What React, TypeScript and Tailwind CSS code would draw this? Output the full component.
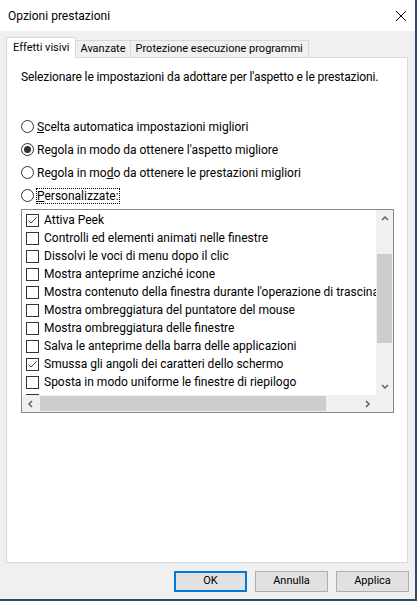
import React from "react";

const items = [
  { label: "Attiva Peek", checked: true },
  { label: "Controlli ed elementi animati nelle finestre", checked: false },
  { label: "Dissolvi le voci di menu dopo il clic", checked: false },
  { label: "Mostra anteprime anziché icone", checked: false },
  { label: "Mostra contenuto della finestra durante l'operazione di trascinamento", checked: false },
  { label: "Mostra ombreggiatura del puntatore del mouse", checked: false },
  { label: "Mostra ombreggiatura delle finestre", checked: false },
  { label: "Salva le anteprime della barra delle applicazioni", checked: false },
  { label: "Smussa gli angoli dei caratteri dello schermo", checked: true },
  { label: "Sposta in modo uniforme le finestre di riepilogo", checked: false },
  { label: "", checked: false },
];

function Radio({ checked, children }: { checked?: boolean; children: React.ReactNode }) {
  return (
    <div className="flex items-center h-[23px]">
      <span className="w-[13px] h-[13px] rounded-full border border-[#333] bg-white flex items-center justify-center shrink-0">
        {checked && <span className="w-[7px] h-[7px] rounded-full bg-[#333]" />}
      </span>
      <span className="ml-[3px]">{children}</span>
    </div>
  );
}

function Chevron({ dir }: { dir: "up" | "down" | "left" | "right" }) {
  const pts = {
    up: "1,5 4,2 7,5",
    down: "1,2 4,5 7,2",
    left: "5,1 2,4 5,7",
    right: "2,1 5,4 2,7",
  }[dir];
  const w = dir === "up" || dir === "down" ? 8 : 7;
  const h = dir === "up" || dir === "down" ? 7 : 8;
  return (
    <svg width={w} height={h} viewBox={`0 0 ${w} ${h}`}>
      <polyline points={pts} fill="none" stroke="#606060" strokeWidth="1.5" />
    </svg>
  );
}

export default function App() {
  return (
    <div
      className="w-[417px] h-[601px] bg-[#f0f0f0] flex flex-col border-r-2 border-b-2 border-[#2a4a6e] text-[12px] text-black overflow-hidden"
      style={{ fontFamily: "Roboto, 'Noto Sans', sans-serif" }}
    >
      {/* Title bar */}
      <div className="h-[31px] bg-white flex items-center justify-between pl-[8px] pr-[9px] shrink-0">
        <span>Opzioni prestazioni</span>
        <svg width="10" height="10" viewBox="0 0 10 10">
          <path d="M0 0 L10 10 M10 0 L0 10" stroke="#000" strokeWidth="1" />
        </svg>
      </div>

      {/* Tabs */}
      <div className="pt-[6px] pl-[6px] flex items-end text-[11px]">
        <div className="h-[21px] -mb-px relative z-10 bg-white border border-b-0 border-[#d9d9d9] px-[6px] flex items-center">
          Effetti visivi
        </div>
        <div className="h-[17px] bg-[#f0f0f0] border border-l-0 border-b-0 border-[#d9d9d9] px-[4px] flex items-center">
          Avanzate
        </div>
        <div className="h-[17px] bg-[#f0f0f0] border border-l-0 border-b-0 border-[#d9d9d9] px-[5px] flex items-center">
          Protezione esecuzione programmi
        </div>
      </div>

      {/* Panel */}
      <div className="ml-[6px] w-[402px] h-[506px] bg-white border border-[#d9d9d9] pl-[14px] pt-[11px] flex flex-col">
        <div className="leading-[16px] tracking-[-0.11px]">
          Selezionare le impostazioni da adottare per l'aspetto e le prestazioni.
        </div>

        <div className="mt-[30px] flex flex-col">
          <Radio>
            <span className="underline">S</span>celta automatica impostazioni migliori
          </Radio>
          <Radio checked>
            Re<span className="underline">g</span>ola in modo da ottenere l'aspetto migliore
          </Radio>
          <Radio>
            Regola in mo<span className="underline">d</span>o da ottenere le prestazioni migliori
          </Radio>
          <Radio>
            <span className="outline outline-1 outline-dotted outline-black">
              <span className="underline">P</span>ersonalizzate:
            </span>
          </Radio>
        </div>

        {/* List box */}
        <div className="mt-[2px] w-[373px] h-[204px] border border-[#828790] flex flex-col">
          <div className="flex flex-1 min-h-0">
            <div className="flex-1 overflow-hidden pt-px">
              {items.map((it, i) => (
                <div key={i} className="h-[18px] flex items-center pl-[4px] whitespace-nowrap">
                  <span className="w-[13px] h-[13px] border border-[#333] bg-white shrink-0 flex items-center justify-center">
                    {it.checked && (
                      <svg width="11" height="11" viewBox="0 0 11 11">
                        <polyline points="1.5,5.5 4,8 9.5,2.5" fill="none" stroke="#444" strokeWidth="1" />
                      </svg>
                    )}
                  </span>
                  {it.label && <span className="ml-[5px]">{it.label}</span>}
                </div>
              ))}
            </div>
            {/* vertical scrollbar */}
            <div className="w-[17px] bg-[#f0f0f0] flex flex-col items-center shrink-0">
              <div className="h-[17px] w-full flex items-center justify-center">
                <Chevron dir="up" />
              </div>
              <div className="flex-1 w-full pt-[27px] pb-[35px] px-px">
                <div className="h-full bg-[#cdcdcd]" />
              </div>
              <div className="h-[17px] w-full flex items-center justify-center">
                <Chevron dir="down" />
              </div>
            </div>
          </div>
          {/* horizontal scrollbar */}
          <div className="h-[17px] flex shrink-0">
            <div className="flex-1 bg-[#f0f0f0] flex items-center">
              <div className="w-[17px] h-full flex items-center justify-center">
                <Chevron dir="left" />
              </div>
              <div className="h-[15px] w-[286px] bg-[#cdcdcd] ml-px" />
              <div className="flex-1" />
              <div className="w-[17px] h-full flex items-center justify-center">
                <Chevron dir="right" />
              </div>
            </div>
            <div className="w-[17px] bg-[#f0f0f0]" />
          </div>
        </div>
      </div>

      {/* Buttons */}
      <div className="mt-[8px] flex justify-end gap-[8px] pr-[6px] text-[11px]">
        <button className="w-[73px] h-[21px] bg-[#e1e1e1] border-2 border-[#0078d7] flex items-center justify-center">
          OK
        </button>
        <button className="w-[73px] h-[21px] bg-[#e1e1e1] border border-[#adadad] flex items-center justify-center">
          Annulla
        </button>
        <button className="w-[73px] h-[21px] bg-[#e1e1e1] border border-[#adadad] flex items-center justify-center">
          Applica
        </button>
      </div>
    </div>
  );
}
